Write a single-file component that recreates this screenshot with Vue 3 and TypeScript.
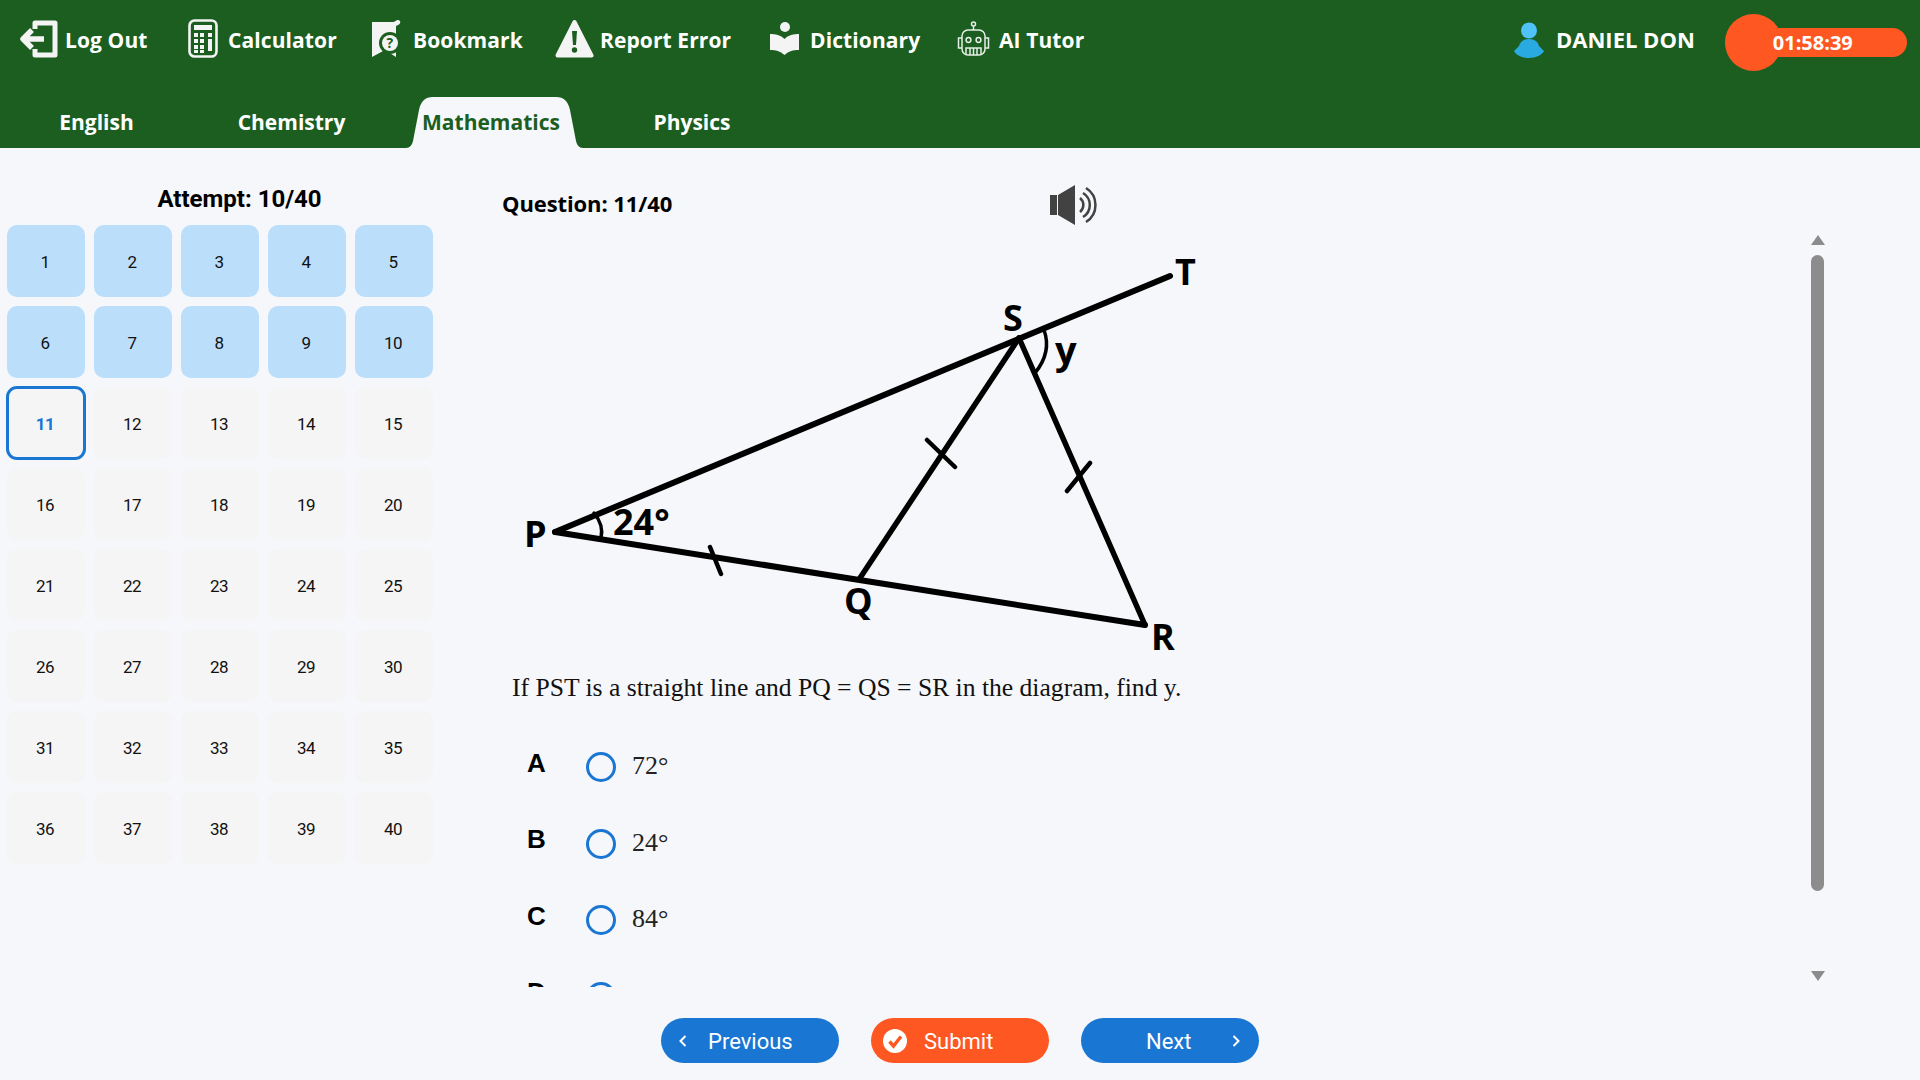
<script setup lang="ts">
import { ref } from 'vue';

const questions = Array.from({ length: 40 }, (_, i) => i + 1);
const attempted = 10;
const current = ref(11);

const tabs = ['English', 'Chemistry', 'Mathematics', 'Physics'];
const activeTab = ref('Mathematics');

const options = [
  { letter: 'A', text: '72°' },
  { letter: 'B', text: '24°' },
  { letter: 'C', text: '84°' },
  { letter: 'D', text: '48°' },
];
const answer = ref('');
</script>

<template>
  <div class="page">
    <header class="topbar">
      <div class="toolbar">
        <a class="tool tool-logout">
          <svg width="38" height="39" viewBox="0 0 38 39">
            <path d="M15 10V4H35V36H15V30" class="ic-line" stroke-width="5" />
            <path d="M24 20H7M12 11L3 20L12 29" class="ic-line" stroke-width="5.5" />
          </svg>
          Log Out
        </a>
        <a class="tool tool-calc">
          <svg width="30" height="39" viewBox="0 0 30 39">
            <rect x="1.5" y="1.5" width="27" height="36" rx="5" class="ic-line" stroke-width="2.6" />
            <rect x="6" y="6" width="18" height="5" fill="#f4f4f4" />
            <g fill="#f4f4f4">
              <rect x="6" y="14" width="4" height="4" /><rect x="12" y="14" width="4" height="4" /><rect x="20" y="14" width="4" height="4" />
              <rect x="6" y="20" width="4" height="4" /><rect x="12" y="20" width="4" height="4" /><rect x="20" y="20" width="4" height="12" />
              <rect x="6" y="26" width="4" height="4" /><rect x="12" y="26" width="4" height="4" />
              <rect x="6" y="31" width="4" height="3" /><rect x="12" y="31" width="4" height="3" />
            </g>
          </svg>
          Calculator
        </a>
        <a class="tool tool-bookmark">
          <svg width="31" height="39" viewBox="0 0 31 39">
            <path d="M1 3H22C24 3 25 1 27 1C30 1 30 5 27 6L25 7V38L14 31L1 38Z" fill="#f4f4f4" />
            <circle cx="19" cy="24" r="11" fill="#1b5e20" />
            <circle cx="19" cy="24" r="8" fill="#f4f4f4" />
            <text x="19" y="29" class="bm-mark">?</text>
          </svg>
          Bookmark
        </a>
        <a class="tool tool-report">
          <svg width="39" height="39" viewBox="0 0 39 39">
            <path d="M19.5 3L36.5 36.5H2.5Z" fill="#f4f4f4" stroke="#f4f4f4" stroke-width="4" stroke-linejoin="round" />
            <path d="M17 12H22L21 26H18Z" fill="#1b5e20" />
            <circle cx="19.5" cy="31" r="2.7" fill="#1b5e20" />
          </svg>
          Report Error
        </a>
        <a class="tool tool-dict">
          <svg width="31" height="33" viewBox="0 0 31 33">
            <circle cx="16" cy="5" r="5" fill="#f4f4f4" />
            <path d="M1 12C6 12 12 13 15.5 17C19 13 25 12 30 12V28C24 28 20 29 15.5 33C11 29 7 28 1 28Z" fill="#f4f4f4" />
          </svg>
          Dictionary
        </a>
        <a class="tool tool-ai">
          <svg width="37" height="35" viewBox="0 0 37 35" class="robot">
            <circle cx="18.5" cy="3" r="2" />
            <path d="M18.5 5V9" />
            <rect x="7" y="9" width="23" height="25" rx="6" />
            <path d="M7 17H3.5V27H7M30 17H33.5V27H30" />
            <circle cx="13.5" cy="19" r="2.4" />
            <circle cx="23.5" cy="19" r="2.4" />
            <path d="M11 34V27H26V34M15 27V34M18.5 27V34M22 27V34" />
          </svg>
          AI Tutor
        </a>

        <div class="user">
          <svg width="30" height="36" viewBox="0 0 30 36">
            <circle cx="15" cy="8.5" r="8" fill="#4fc3f7" />
            <path d="M15 17C9 17 6 20 5 24L0 29C2 33 8 36 15 36C22 36 28 33 30 29L25 24C24 20 21 17 15 17Z" fill="#29abe2" />
          </svg>
          <span>DANIEL DON</span>
        </div>
        <div class="timer"><span>01:58:39</span></div>
      </div>

      <nav class="tabs">
        <a v-for="tab in tabs" :key="tab" class="tab" :class="{ active: tab === activeTab }" @click="activeTab = tab">
          <svg v-if="tab === activeTab" class="tab-bg" width="177" height="51" viewBox="0 0 177 51">
            <path d="M0 51C4 51 6 48 7 44L13 13C15 4 19 0 27 0H150C158 0 162 4 164 13L170 44C171 48 173 51 177 51Z" fill="#f5f7fa" />
          </svg>
          <span>{{ tab }}</span>
        </a>
      </nav>
    </header>

    <main class="main">
      <aside class="sidebar">
        <div class="attempt">Attempt: {{ attempted }}/40</div>
        <div class="grid">
          <button
            v-for="n in questions"
            :key="n"
            class="cell"
            :class="{ done: n <= attempted, current: n === current }"
            @click="current = n"
          >
            {{ n }}
          </button>
        </div>
      </aside>

      <section class="content">
        <div class="q-head">
          <span class="q-count">Question: {{ current }}/40</span>
          <svg class="speaker" width="50" height="46" viewBox="0 0 50 46">
            <path d="M2 13H9V33H2ZM10 13L27 3V43L10 33Z" fill="#424242" />
            <path d="M32 16A9 9 0 0 1 32 30M35 11A14 14 0 0 1 35 35M38 6A20 20 0 0 1 38 40" fill="none" stroke="#424242" stroke-width="2.5" />
          </svg>
        </div>

        <div class="q-body">
          <div class="pane">
            <svg class="diagram" width="700" height="426" viewBox="502 230 700 426">
              <g fill="none" stroke="#000" stroke-linecap="round">
                <path d="M555 532L1170 276" stroke-width="6" />
                <path d="M555 532L1145 625" stroke-width="6" />
                <path d="M1019 338L860 578" stroke-width="5.5" />
                <path d="M1019 338L1145 625" stroke-width="5.5" />
                <path d="M927 440L955 467M1090 463L1067 491M710 547L721 574" stroke-width="4.5" />
                <path d="M594 513Q604 525 601 538" stroke-width="3.5" />
                <path d="M1044 330Q1052 352 1035 373" stroke-width="3.5" />
              </g>
              <g class="labels">
                <text x="1175" y="285">T</text>
                <text x="1003" y="331">S</text>
                <text x="1055" y="364" class="y-label">y</text>
                <text x="524" y="547">P</text>
                <text x="844" y="614">Q</text>
                <text x="1151" y="650">R</text>
                <text x="613" y="535" class="deg">24°</text>
              </g>
            </svg>

            <p class="stem">If PST is a straight line and PQ = QS = SR in the diagram, find y.</p>

            <label v-for="opt in options" :key="opt.letter" class="option">
              <span class="letter">{{ opt.letter }}</span>
              <input v-model="answer" type="radio" name="answer" :value="opt.letter" />
              <span class="opt-text">{{ opt.text }}</span>
            </label>
          </div>

          <div class="scrollbar">
            <span class="arrow up"></span>
            <span class="thumb"></span>
            <span class="arrow down"></span>
          </div>
        </div>
      </section>
    </main>

    <footer class="footer">
      <button class="btn btn-prev">
        <svg width="8" height="12" viewBox="0 0 8 12"><path d="M6.5 1L1.5 6L6.5 11" class="chev" /></svg>
        <span>Previous</span>
      </button>
      <button class="btn btn-submit">
        <svg width="24" height="24" viewBox="0 0 24 24">
          <circle cx="12" cy="12" r="12" fill="#fff" />
          <path d="M6.5 12.5L10.5 17L18 7.5" fill="none" stroke="#ff5722" stroke-width="3.4" />
        </svg>
        <span>Submit</span>
      </button>
      <button class="btn btn-next">
        <span>Next</span>
        <svg width="8" height="12" viewBox="0 0 8 12"><path d="M1.5 1L6.5 6L1.5 11" class="chev" /></svg>
      </button>
    </footer>
  </div>
</template>

<style scoped>
.page {
  display: flex;
  flex-direction: column;
  height: 100vh;
  overflow: hidden;
  background: #f5f7fa;
  color: #000;
  font-family: "Open Sans", "Liberation Sans", sans-serif;
}

.topbar {
  background: #1b5e20;
  height: 148px;
  flex: none;
}

.toolbar {
  display: flex;
  align-items: center;
  height: 80px;
  padding-left: 20px;
  color: #fff;
  font-size: 21px;
  font-weight: 700;
}

.tool {
  display: flex;
  align-items: center;
  flex: none;
  letter-spacing: 0.1px;
}
.tool svg {
  flex: none;
  margin-bottom: 3px;
}
.tool-logout { width: 168px; }
.tool-logout svg { margin-right: 7px; }
.tool-calc { width: 183px; }
.tool-calc svg { margin-right: 10px; }
.tool-bookmark { width: 184px; }
.tool-bookmark svg { margin-right: 11px; }
.tool-report { width: 214px; }
.tool-report svg { margin-right: 6px; }
.tool-dict { width: 186px; }
.tool-dict svg { margin-right: 10px; }
.tool-ai { width: 140px; }
.tool-ai svg { margin-right: 7px; }

.ic-line {
  fill: none;
  stroke: #f4f4f4;
  stroke-linejoin: round;
}
.bm-mark {
  font-family: "Open Sans", sans-serif;
  font-size: 14px;
  font-weight: 700;
  fill: #1b5e20;
  text-anchor: middle;
}
.robot {
  fill: none;
  stroke: #e6efe6;
  stroke-width: 1.5;
}

.user {
  display: flex;
  align-items: center;
  gap: 12px;
  margin-left: 419px;
  font-size: 22px;
  font-weight: 700;
}
.user span {
  margin-bottom: 3px;
}

.timer {
  position: relative;
  width: 156px;
  height: 29px;
  margin-left: 56px;
  margin-top: 5px;
  padding-left: 22px;
  box-sizing: border-box;
  background: #ff5722;
  border-radius: 15px;
  font-size: 20px;
  font-weight: 700;
  line-height: 29px;
}
.timer span {
  position: relative;
}
.timer::before {
  content: "";
  position: absolute;
  left: -26px;
  top: -14px;
  width: 57px;
  height: 57px;
  border-radius: 50%;
  background: #ff5722;
}

.tabs {
  display: grid;
  grid-template-columns: 193px 197px 202px 200px;
  height: 68px;
  align-items: end;
}

.tab {
  position: relative;
  display: flex;
  align-items: center;
  justify-content: center;
  height: 51px;
  padding-bottom: 2px;
  box-sizing: border-box;
  color: #fff;
  font-size: 21px;
  font-weight: 700;
  letter-spacing: 0;
  cursor: pointer;
}
.tab span {
  position: relative;
}
.tab.active {
  color: #1b5e20;
}
.tab-bg {
  position: absolute;
  left: 16px;
  top: 0;
}

.main {
  display: flex;
  flex: 1;
  min-height: 0;
}

.sidebar {
  flex: none;
  width: 502px;
  box-sizing: border-box;
  padding-left: 7px;
}

.attempt {
  width: 465px;
  height: 77px;
  padding-top: 37px;
  box-sizing: border-box;
  text-align: center;
  font-family: Roboto, "Liberation Sans", sans-serif;
  font-size: 24px;
  font-weight: 700;
  line-height: 28px;
}

.grid {
  display: grid;
  grid-template-columns: repeat(5, 78px);
  grid-auto-rows: 72px;
  gap: 9px;
}

.cell {
  border: 0;
  padding: 2px 2px 0 0;
  border-radius: 10px;
  background: #f5f5f5;
  color: #111;
  font-family: Roboto, "Liberation Sans", sans-serif;
  font-size: 17px;
  letter-spacing: -0.6px;
  cursor: pointer;
}
.cell.done {
  background: #bbdefb;
}
.cell.current {
  outline: 3px solid #1976d2;
  outline-offset: -2px;
  color: #1976d2;
  font-weight: 700;
}

.content {
  flex: 1;
  min-width: 0;
}

.q-head {
  display: flex;
  align-items: center;
  height: 42px;
  margin-top: 36px;
}
.q-count {
  width: 546px;
  margin-bottom: 4px;
  font-size: 22px;
  font-weight: 700;
  letter-spacing: -0.1px;
}
.speaker {
  flex: none;
}

.q-body {
  display: flex;
  height: 757px;
  margin-top: 4px;
}

.pane {
  width: 1308px;
  overflow: hidden;
}

.diagram {
  display: block;
  overflow: visible;
}
.labels text {
  font-family: "Open Sans", sans-serif;
  font-size: 36px;
  font-weight: 700;
  fill: #000;
}
.labels .y-label {
  font-size: 38px;
}

.stem {
  margin: 13px 0 21.75px 10px;
  font-family: "Liberation Serif", serif;
  font-size: 25.6px;
  line-height: 38px;
  color: #111;
}

.option {
  display: flex;
  align-items: center;
  height: 76.5px;
  padding-left: 25px;
}
.letter {
  width: 59px;
  margin-bottom: 8px;
  font-family: "Liberation Sans", sans-serif;
  font-size: 26px;
  font-weight: 700;
}
.option input {
  appearance: none;
  flex: none;
  width: 30px;
  height: 30px;
  margin: 0 16px 0 0;
  border: 3px solid #1976d2;
  border-radius: 50%;
}
.opt-text {
  margin-bottom: 2px;
  font-family: "Liberation Serif", serif;
  font-size: 26px;
  color: #222;
}

.scrollbar {
  display: flex;
  flex-direction: column;
  align-items: center;
  width: 15px;
  padding: 5px 0 6px;
  box-sizing: border-box;
}
.thumb {
  width: 13px;
  height: 636px;
  margin-top: 10px;
  border-radius: 7px;
  background: #8c8c8c;
}
.arrow {
  width: 0;
  height: 0;
  border-left: 7.5px solid transparent;
  border-right: 7.5px solid transparent;
}
.arrow.up {
  border-bottom: 10px solid #8c8c8c;
}
.arrow.down {
  margin-top: auto;
  border-top: 10px solid #8c8c8c;
}

.footer {
  display: flex;
  justify-content: center;
  gap: 32px;
  flex: none;
  height: 93px;
  padding-top: 31px;
  box-sizing: border-box;
}

.btn {
  display: flex;
  align-items: center;
  width: 178px;
  height: 45px;
  padding: 0;
  border: 0;
  border-radius: 23px;
  color: #fff;
  background: #1976d2;
  font-family: Roboto, "Liberation Sans", sans-serif;
  font-size: 22px;
  cursor: pointer;
}
.btn span {
  padding-top: 2px;
}
.btn-prev {
  padding-left: 18px;
  gap: 21px;
}
.btn-submit {
  padding-left: 12px;
  gap: 17px;
  background: #ff5722;
}
.btn-next {
  padding-left: 65px;
  gap: 41px;
}
.chev {
  fill: none;
  stroke: #fff;
  stroke-width: 2;
}
</style>

<style>
html,
body {
  margin: 0;
  background: #f5f7fa;
}
</style>
